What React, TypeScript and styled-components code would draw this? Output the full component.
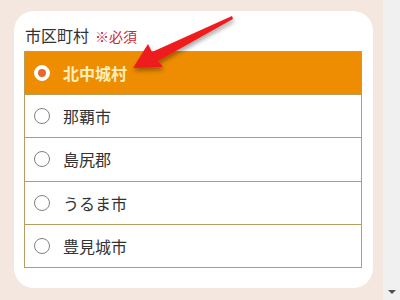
import styled, { createGlobalStyle } from 'styled-components'

const GlobalStyle = createGlobalStyle`
  html, body {
    margin: 0;
    padding: 0;
    overflow: hidden;
  }
  body {
    background: #f3e7df;
    font-family: "Noto Sans CJK JP", "Noto Sans", sans-serif;
  }
`

const Page = styled.div`
  position: relative;
  display: flex;
  width: 400px;
  height: 300px;
`

const Main = styled.div`
  flex: 1;
  padding: 11px 10px 12px 14px;
  box-sizing: border-box;
`

const ScrollBar = styled.div`
  width: 17px;
  background: #f0f0f0;
  display: flex;
  flex-direction: column;
  justify-content: flex-end;
  align-items: center;
  padding-bottom: 6px;
  box-sizing: border-box;
`

const DownArrow = styled.div`
  width: 0;
  height: 0;
  border-left: 4px solid transparent;
  border-right: 4px solid transparent;
  border-top: 4px solid #505050;
`

const Card = styled.div`
  background: #fff;
  border-radius: 20px;
  height: 100%;
  padding: 11px 11px 0 10px;
  box-sizing: border-box;
`

const LabelRow = styled.div`
  display: flex;
  align-items: baseline;
  gap: 6px;
  height: 29px;
  padding-left: 1px;
  padding-top: 2px;
  box-sizing: border-box;
`

const Label = styled.span`
  font-size: 16px;
  line-height: 22px;
  color: #333;
`

const Required = styled.span`
  font-size: 14px;
  color: #c8283a;
`

const List = styled.div`
  border: 1px solid #b89d5c;
  display: flex;
  flex-direction: column;
`

const Row = styled.div<{ $selected?: boolean }>`
  display: flex;
  align-items: center;
  gap: 13px;
  height: 42.2px;
  padding-left: 9px;
  background: ${(p) => (p.$selected ? '#ee8c02' : '#fff')};
  & + & {
    border-top: 1px solid #b89d5c;
  }
`

const Radio = styled.span<{ $checked?: boolean }>`
  width: 16px;
  height: 16px;
  border-radius: 50%;
  box-sizing: border-box;
  border: 1px solid ${(p) => (p.$checked ? '#fff' : '#808080')};
  background: #fff;
  display: flex;
  align-items: center;
  justify-content: center;
  &::after {
    content: '';
    display: ${(p) => (p.$checked ? 'block' : 'none')};
    width: 8px;
    height: 8px;
    border-radius: 50%;
    background: #e8672a;
  }
`

const OptionText = styled.span<{ $selected?: boolean }>`
  font-size: 16px;
  color: ${(p) => (p.$selected ? '#fff0b8' : '#333')};
  font-weight: ${(p) => (p.$selected ? 700 : 400)};
`

const Pointer = styled.svg`
  position: absolute;
  left: 0;
  top: 0;
  pointer-events: none;
`

const options = ['北中城村', '那覇市', '島尻郡', 'うるま市', '豊見城市']

const App = (): React.ReactElement => {
  return (
    <Page>
      <GlobalStyle />
      <Main>
        <Card>
          <LabelRow>
            <Label>市区町村</Label>
            <Required>※必須</Required>
          </LabelRow>
          <List>
            {options.map((name, index) => (
              <Row key={name} $selected={index === 0}>
                <Radio $checked={index === 0} />
                <OptionText $selected={index === 0}>{name}</OptionText>
              </Row>
            ))}
          </List>
        </Card>
      </Main>
      <ScrollBar>
        <DownArrow />
      </ScrollBar>
      <Pointer width="400" height="300" viewBox="0 0 400 300">
        <defs>
          <filter id="shadow" x="-20%" y="-20%" width="140%" height="160%">
            <feDropShadow dx="1" dy="3" stdDeviation="2" floodColor="#000" floodOpacity="0.35" />
          </filter>
        </defs>
        <polygon
          filter="url(#shadow)"
          fill="#ee1c1c"
          points="232,16 233,19 158,61 163,67 133,68 148,44 152,52"
        />
      </Pointer>
    </Page>
  )
}

export default App
